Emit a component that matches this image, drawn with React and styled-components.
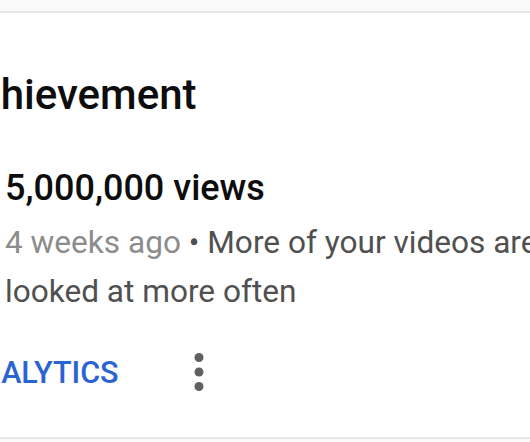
import React from 'react'
import styled, { createGlobalStyle } from 'styled-components';

const Global = createGlobalStyle`
  html, body {
    margin: 0;
    background: #f9f9f9;
    overflow: hidden;
  }
  body {
    font-family: Roboto, "Liberation Sans", Arial, sans-serif;
  }
`;

const Page = styled.div`
  width: 530px;
  height: 442px;
  padding-top: 11px;
  box-sizing: border-box;
  overflow: hidden;
`;

const Card = styled.div`
  margin-left: -49px;
  width: 620px;
  height: 428px;
  box-sizing: border-box;
  background: #fff;
  border-top: 2px solid #e6e6e6;
  border-bottom: 2px solid #e6e6e6;
  padding-top: 54px;
`;

const Title = styled.h2`
  margin: 0;
  font-size: 42px;
  font-weight: 500;
  line-height: 56px;
  color: #0d0d0d;
  white-space: nowrap;
`;

const Body = styled.div`
  padding-left: 54px;
  margin-top: 41px;
`;

const Views = styled.div`
  font-size: 36px;
  font-weight: 500;
  line-height: 48px;
  color: #0d0d0d;
`;

const Desc = styled.p`
  margin: 6px 0 0;
  font-size: 31.6px;
  line-height: 49px;
  color: #505050;
  width: 560px;
`;

const Date = styled.span`
  color: #8c8c8c;
`;

const Actions = styled.div`
  display: flex;
  align-items: center;
  gap: 51px;
  margin-top: 27px;
  margin-left: -46px;
  height: 58px;
`;

const TextButton = styled.button`
  border: 0;
  padding: 0;
  background: none;
  font-family: inherit;
  font-size: 30.5px;
  font-weight: 500;
  color: #2a63d4;
  text-transform: uppercase;
  cursor: pointer;
`;

const MenuButton = styled.button`
  border: 0;
  padding: 0;
  background: none;
  width: 58px;
  height: 58px;
  display: flex;
  align-items: center;
  justify-content: center;
`;

function MoreVert() {
  return (
    <svg width="58" height="58" viewBox="0 0 58 58">
      <circle cx="29" cy="14.5" r="4.5" fill="#606060" />
      <circle cx="29" cy="29" r="4.5" fill="#606060" />
      <circle cx="29" cy="43.5" r="4.5" fill="#606060" />
    </svg>
  );
}

export default function App() {
  return (
    <Page>
      <Global />
      <Card>
        <Title>Achievement</Title>
        <Body>
          <Views>5,000,000 views</Views>
          <Desc>
            <Date>4 weeks ago</Date> • More of your videos are looked at more often
          </Desc>
          <Actions>
            <TextButton>Analytics</TextButton>
            <MenuButton>
              <MoreVert />
            </MenuButton>
          </Actions>
        </Body>
      </Card>
    </Page>
  );
}
